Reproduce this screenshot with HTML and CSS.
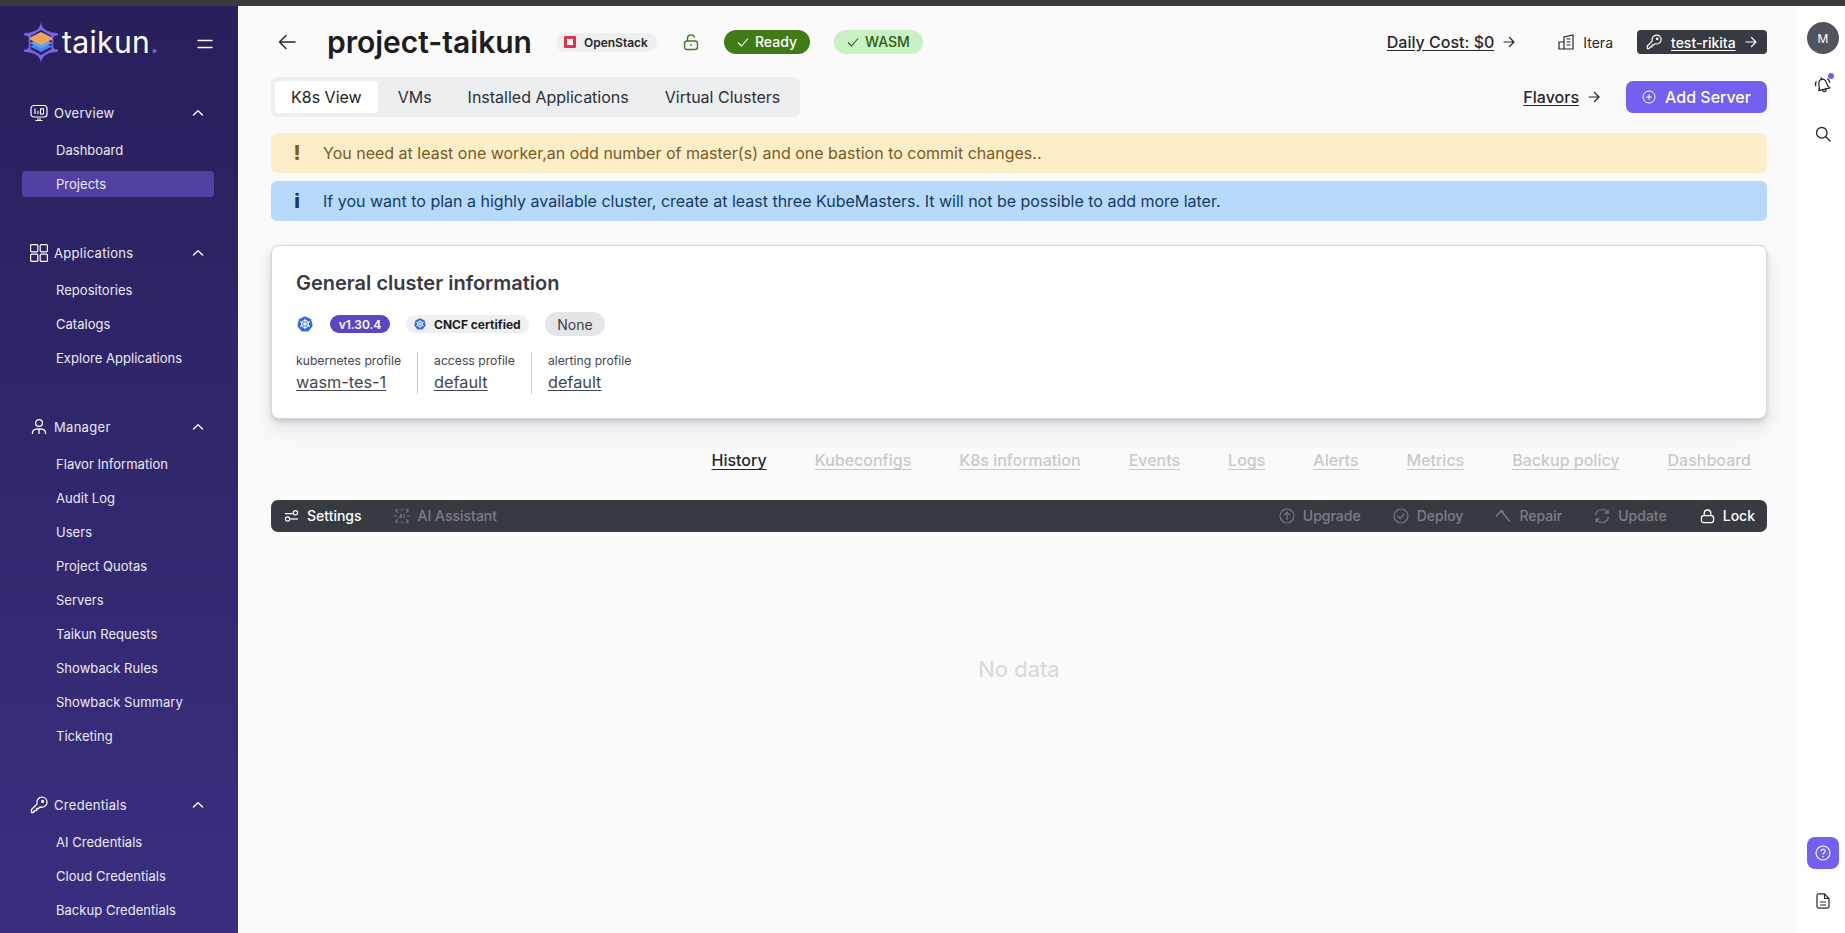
FILE: index.html
```html
<!DOCTYPE html>
<html lang="en">
<head>
<meta charset="utf-8">
<title>project-taikun</title>
<link rel="stylesheet" href="styles.css">
</head>
<body>
<div class="topbar"></div>
<div class="app">
  <aside class="sidebar">
    <div class="brand">
      <svg class="logo" viewBox="0 0 34 41" width="34" height="41">
        <path d="M17 0 C17.6 4 19 6.5 22 8.3 C25 10 29 10.8 33 11 C34.4 11.2 34.4 13.4 33 13.6 C31 13.8 29.6 14.4 29.3 16 L29.3 25 C29.6 26.6 31 27.2 33 27.4 C34.4 27.6 34.4 29.8 33 30 C29 30.2 25 31 22 32.7 C19 34.5 17.6 37 17 41 C16.4 37 15 34.5 12 32.7 C9 31 5 30.2 1 30 C-0.4 29.8 -0.4 27.6 1 27.4 C3 27.2 4.4 26.6 4.7 25 L4.7 16 C4.4 14.4 3 13.8 1 13.6 C-0.4 13.4 -0.4 11.2 1 11 C5 10.8 9 10 12 8.3 C15 6.5 16.4 4 17 0Z" fill="#7a62e4"/>
        <path d="M17 8 L27.4 14 V27 L17 33 L6.6 27 V14Z" fill="#2a205f"/>
        <path d="M17 19 L28 24.5 L17 30 L6 24.5Z" fill="#4f7fee"/>
        <path d="M17 15.5 L28 21 L17 26.5 L6 21Z" fill="#58a6f0"/>
        <path d="M17 10 L28 15.5 V17.5 L17 23 L6 17.5 V15.5Z" fill="#eba653"/>
      </svg>
      <span class="wordmark">taikun<span class="dot">.</span></span>
      <svg class="burger" viewBox="0 0 16 10" width="16" height="10"><path d="M1 1.5H15M1 8.5H15" stroke="#fff" stroke-width="1.4" stroke-linecap="round"/></svg>
    </div>

    <section class="group">
      <div class="group-head">
        <svg class="nav-ico" viewBox="0 0 18 18" width="18" height="18"><rect x="1" y="1.5" width="16" height="11.5" rx="3" fill="none" stroke="#fff" stroke-width="1.2"/><path d="M5 4.5V10M8 7V10M5.5 16.5H12.5M7 15H11" stroke="#fff" stroke-width="1.2" fill="none"/><rect x="10.5" y="4.8" width="3" height="5.2" fill="none" stroke="#fff" stroke-width="1.1"/></svg>
        <span class="group-title">Overview</span>
        <svg class="chev" viewBox="0 0 12 8" width="12" height="8"><path d="M1.5 6L6 1.8L10.5 6" fill="none" stroke="#fff" stroke-width="1.4" stroke-linecap="round" stroke-linejoin="round"/></svg>
      </div>
      <a class="item">Dashboard</a>
      <a class="item active">Projects</a>
    </section>

    <section class="group">
      <div class="group-head">
        <svg class="nav-ico" viewBox="0 0 18 18" width="18" height="18"><g fill="none" stroke="#fff" stroke-width="1.2"><rect x="0.6" y="0.6" width="7.2" height="7.2" rx="1"/><rect x="10.2" y="0.6" width="7.2" height="7.2" rx="1"/><rect x="0.6" y="10.2" width="7.2" height="7.2" rx="1"/><rect x="10.2" y="10.2" width="7.2" height="7.2" rx="1"/></g></svg>
        <span class="group-title">Applications</span>
        <svg class="chev" viewBox="0 0 12 8" width="12" height="8"><path d="M1.5 6L6 1.8L10.5 6" fill="none" stroke="#fff" stroke-width="1.4" stroke-linecap="round" stroke-linejoin="round"/></svg>
      </div>
      <a class="item">Repositories</a>
      <a class="item">Catalogs</a>
      <a class="item">Explore Applications</a>
    </section>

    <section class="group">
      <div class="group-head">
        <svg class="nav-ico" viewBox="0 0 18 18" width="18" height="18"><g fill="none" stroke="#fff" stroke-width="1.3"><circle cx="9" cy="5" r="3.4"/><path d="M2.5 16V14.5C2.5 12 4.5 10.8 9 10.8C13.5 10.8 15.5 12 15.5 14.5V16M9 11V16"/></g></svg>
        <span class="group-title">Manager</span>
        <svg class="chev" viewBox="0 0 12 8" width="12" height="8"><path d="M1.5 6L6 1.8L10.5 6" fill="none" stroke="#fff" stroke-width="1.4" stroke-linecap="round" stroke-linejoin="round"/></svg>
      </div>
      <a class="item">Flavor Information</a>
      <a class="item">Audit Log</a>
      <a class="item">Users</a>
      <a class="item">Project Quotas</a>
      <a class="item">Servers</a>
      <a class="item">Taikun Requests</a>
      <a class="item">Showback Rules</a>
      <a class="item">Showback Summary</a>
      <a class="item">Ticketing</a>
    </section>

    <section class="group">
      <div class="group-head">
        <svg class="nav-ico" viewBox="0 0 18 18" width="18" height="18"><g fill="none" stroke="#fff" stroke-width="1.3" stroke-linejoin="round"><path d="M1.5 13.5L7 8C6 4.5 8.5 1.2 12 1.2C14.8 1.2 17 3.4 17 6.2C17 9.6 13.6 12 10 11L8.5 12.5H6.8V14.5H4.8L3.3 16.5H1.5Z"/><circle cx="12.6" cy="5.4" r="0.9"/></g></svg>
        <span class="group-title">Credentials</span>
        <svg class="chev" viewBox="0 0 12 8" width="12" height="8"><path d="M1.5 6L6 1.8L10.5 6" fill="none" stroke="#fff" stroke-width="1.4" stroke-linecap="round" stroke-linejoin="round"/></svg>
      </div>
      <a class="item">AI Credentials</a>
      <a class="item">Cloud Credentials</a>
      <a class="item">Backup Credentials</a>
    </section>
  </aside>

  <main class="main">
    <header class="head">
      <div class="head-left">
        <svg class="back" viewBox="0 0 18 16" width="18" height="16"><path d="M17 8H1.5M8 1.5L1.5 8L8 14.5" fill="none" stroke="#26272b" stroke-width="1.5" stroke-linecap="round" stroke-linejoin="round"/></svg>
        <h1 class="title">project-taikun</h1>
        <span class="cloud-chip">
          <svg viewBox="0 0 12 12" width="12" height="12"><rect width="12" height="12" rx="1" fill="#e0324b"/><rect x="3" y="3" width="6" height="6" fill="#fff"/></svg>
          OpenStack
        </span>
        <svg class="lock-green" viewBox="0 0 16 18" width="16" height="18"><g fill="none" stroke="#3f7a23" stroke-width="1.4"><rect x="1.5" y="8" width="13" height="8.5" rx="2.5"/><path d="M4.5 8V5C4.5 1.5 10.5 0.5 11.5 4.5"/><path d="M8 11V13"/></g></svg>
        <span class="status ready"><svg viewBox="0 0 12 10" width="12" height="10"><path d="M1 5.5L4.5 9L11 1.5" fill="none" stroke="#fff" stroke-width="1.1"/></svg>Ready</span>
        <span class="status wasm"><svg viewBox="0 0 12 10" width="12" height="10"><path d="M1 5.5L4.5 9L11 1.5" fill="none" stroke="#2d5c1a" stroke-width="1.1"/></svg>WASM</span>
      </div>
      <div class="head-right">
        <a class="cost"><span class="u">Daily Cost: $0</span></a>
        <svg class="arrow" viewBox="0 0 12 12" width="12" height="12"><path d="M1 6H11M6.5 1.5L11 6L6.5 10.5" fill="none" stroke="#26272b" stroke-width="1.2" stroke-linecap="round" stroke-linejoin="round"/></svg>
        <svg class="org-ico" viewBox="0 0 16 16" width="16" height="16"><g fill="none" stroke="#26272b" stroke-width="1.2"><path d="M6 15V3L15 1V15H1V8H6"/><path d="M8.5 5H12.5M8.5 8H12.5M8.5 11H12.5"/></g></svg>
        <span class="org">Itera</span>
        <a class="key-chip">
          <svg viewBox="0 0 18 18" width="16" height="16"><g fill="none" stroke="#fff" stroke-width="1.3" stroke-linejoin="round"><path d="M1.5 13.5L7 8C6 4.5 8.5 1.2 12 1.2C14.8 1.2 17 3.4 17 6.2C17 9.6 13.6 12 10 11L8.5 12.5H6.8V14.5H4.8L3.3 16.5H1.5Z"/><circle cx="12.6" cy="5.4" r="0.9"/></g></svg>
          <span class="u">test-rikita</span>
          <svg viewBox="0 0 12 12" width="12" height="12"><path d="M1 6H11M6.5 1.5L11 6L6.5 10.5" fill="none" stroke="#fff" stroke-width="1.2" stroke-linecap="round" stroke-linejoin="round"/></svg>
        </a>
      </div>
    </header>

    <div class="toolbar">
      <nav class="seg">
        <a class="seg-tab on">K8s View</a>
        <a class="seg-tab">VMs</a>
        <a class="seg-tab">Installed Applications</a>
        <a class="seg-tab">Virtual Clusters</a>
      </nav>
      <div class="toolbar-right">
        <a class="flavors u">Flavors</a>
        <svg class="arrow" viewBox="0 0 12 12" width="12" height="12"><path d="M1 6H11M6.5 1.5L11 6L6.5 10.5" fill="none" stroke="#26272b" stroke-width="1.2" stroke-linecap="round" stroke-linejoin="round"/></svg>
        <button class="add">
          <svg viewBox="0 0 14 14" width="14" height="14"><g fill="none" stroke="#fff" stroke-width="1"><circle cx="7" cy="7" r="6"/><path d="M7 4.2V9.8M4.2 7H9.8"/></g></svg>
          Add Server
        </button>
      </div>
    </div>

    <div class="alert warn"><span class="alert-ico">!</span>You need at least one worker,an odd number of master(s) and one bastion to commit changes..</div>
    <div class="alert info"><span class="alert-ico">i</span>If you want to plan a highly available cluster, create at least three KubeMasters. It will not be possible to add more later.</div>

    <section class="card">
      <h2 class="card-title">General cluster information</h2>
      <div class="badges">
        <svg class="k8s" viewBox="0 0 16 16" width="16" height="16"><path d="M8 0.3L14.2 3.3L15.7 10L11.4 15.4H4.6L0.3 10L1.8 3.3Z" fill="#326ce5"/><g fill="none" stroke="#fff" stroke-width="1"><circle cx="8" cy="8" r="3.6"/><path d="M8 2.8V13.2M3 5.5L13 10.5M13 5.5L3 10.5"/></g></svg>
        <span class="ver">v1.30.4</span>
        <span class="cncf">
          <svg viewBox="0 0 16 16" width="12" height="12"><path d="M8 0.3L14.2 3.3L15.7 10L11.4 15.4H4.6L0.3 10L1.8 3.3Z" fill="#326ce5"/><g fill="none" stroke="#fff" stroke-width="1"><circle cx="8" cy="8" r="3.6"/><path d="M8 2.8V13.2M3 5.5L13 10.5M13 5.5L3 10.5"/></g></svg>
          CNCF certified
        </span>
        <span class="none">None</span>
      </div>
      <div class="profiles">
        <div class="profile"><span class="p-label">kubernetes profile</span><a class="p-value">wasm-tes-1</a></div>
        <div class="profile"><span class="p-label">access profile</span><a class="p-value">default</a></div>
        <div class="profile"><span class="p-label">alerting profile</span><a class="p-value">default</a></div>
      </div>
    </section>

    <nav class="tabs">
      <a class="tab current">History</a>
      <a class="tab">Kubeconfigs</a>
      <a class="tab">K8s information</a>
      <a class="tab">Events</a>
      <a class="tab">Logs</a>
      <a class="tab">Alerts</a>
      <a class="tab">Metrics</a>
      <a class="tab">Backup policy</a>
      <a class="tab">Dashboard</a>
    </nav>

    <div class="actions">
      <div class="act-group left">
        <span class="act on"><svg viewBox="0 0 16 14" width="15" height="14"><g fill="none" stroke="#fff" stroke-width="1.3"><path d="M1 4.5H9.5"/><circle cx="12.2" cy="3.6" r="2.3"/><path d="M15 10.2H6.5"/><circle cx="3.8" cy="10.2" r="2.3"/></g></svg>Settings</span>
        <span class="act"><svg viewBox="0 0 16 16" width="16" height="16"><g fill="none" stroke="#7b7d87" stroke-width="1"><path d="M1 2L4 5M15 2L12 5M1 14L4 11M15 14L12 11M8 0.5V3M8 13V15.5M0.5 8H3M13 8H15.5M3 0.5V3M13 0.5V3M3 13V15.5M13 13V15.5"/><path d="M5.5 10L6.8 6L8 10M6 8.8H7.6M10 6V10" stroke-width="0.9"/></g></svg>AI Assistant</span>
      </div>
      <div class="act-group">
        <span class="act"><svg viewBox="0 0 16 16" width="16" height="16"><g fill="none" stroke="#7b7d87" stroke-width="1.1"><circle cx="8" cy="8" r="7"/><path d="M8 12V4.5M5 7.2L8 4.2L11 7.2"/></g></svg>Upgrade</span>
        <span class="act"><svg viewBox="0 0 16 16" width="16" height="16"><g fill="none" stroke="#7b7d87" stroke-width="1.1"><circle cx="8" cy="8" r="7"/><path d="M4.8 8.2L7.2 10.5L11.4 5.8"/></g></svg>Deploy</span>
        <span class="act"><svg viewBox="0 0 16 16" width="16" height="16"><g fill="none" stroke="#7b7d87" stroke-width="1.3"><path d="M1 8.5L6.5 2.5L8.5 4.5M6 3L15 13.5"/></g></svg>Repair</span>
        <span class="act"><svg viewBox="0 0 16 16" width="16" height="16"><g fill="none" stroke="#7b7d87" stroke-width="1.2"><path d="M1.5 7C2.2 3.8 5 1.5 8 1.5C10.5 1.5 12.5 2.8 13.8 5M14 1.5V5.2H10.5"/><path d="M14.5 9C13.8 12.2 11 14.5 8 14.5C5.5 14.5 3.5 13.2 2.2 11M2 14.5V10.8H5.5"/></g></svg>Update</span>
        <span class="act on"><svg viewBox="0 0 16 16" width="15" height="16"><g fill="none" stroke="#fff" stroke-width="1.4"><rect x="1.5" y="7.5" width="13" height="7.5" rx="2.5"/><path d="M4.5 7.5V5C4.5 0.5 11.5 0.5 11.5 5V7.5"/></g></svg>Lock</span>
      </div>
    </div>

    <p class="empty">No data</p>
  </main>

  <aside class="rail">
    <div class="avatar">M</div>
    <div class="bell">
      <svg class="bell-ico" viewBox="0 0 18 18" width="18" height="18"><g fill="none" stroke="#26272b" stroke-width="1.3" stroke-linejoin="round" stroke-linecap="round"><path d="M3.5 13.5C5 12 5 10 5 8.5C5 5.5 6.8 3 9 3C11.2 3 13 5.5 13 8.5C13 10 13.2 12 15 13.5Z"/><path d="M7.2 13.5C7.2 16.5 10.8 16.5 10.8 13.5M9 3V1.6M1.8 8C1.8 6.5 2.2 5.3 3 4.3M16.2 8C16.2 6.5 15.8 5.3 15 4.3"/></g></svg>
      <span class="ping"></span>
    </div>
    <svg class="search" viewBox="0 0 16 16" width="16" height="16"><g fill="none" stroke="#26272b" stroke-width="1.3" stroke-linecap="round"><circle cx="6.8" cy="6.8" r="5.3"/><path d="M10.8 10.8L15 15"/></g></svg>
    <div class="rail-gap"></div>
    <div class="help"><svg viewBox="0 0 16 16" width="16" height="16"><g fill="none" stroke="#fff" stroke-width="1.1"><circle cx="8" cy="8" r="7"/><path d="M6 6.3C6 3.8 10.2 3.8 10.2 6.2C10.2 7.8 8 7.8 8 9.6"/></g><circle cx="8" cy="11.8" r="0.8" fill="#fff"/></svg></div>
    <svg class="doc" viewBox="0 0 14 16" width="14" height="16"><g fill="none" stroke="#26272b" stroke-width="1.2" stroke-linejoin="round"><path d="M2.5 0.8H8.5L13 5.3V13C13 14.3 12.2 15.2 11 15.2H3C1.8 15.2 1 14.3 1 13V2.5C1 1.5 1.6 0.8 2.5 0.8Z"/><path d="M8.5 0.8V5.3H13M4 9H10M4 12H10"/></g></svg>
  </aside>
</div>
</body>
</html>
```

FILE: styles.css
```css
* { box-sizing: border-box; }
html, body { margin: 0; height: 100%; overflow: hidden; }
body { font-family: "Inter", "Liberation Sans", sans-serif; color: #26272b; background: #fff; }
h1, h2, p { margin: 0; }
svg { flex: none; display: block; }
.u { text-decoration: underline; text-underline-offset: 2px; }

.topbar { height: 6px; background: #3a3a3c; }
.app { display: flex; height: 927px; overflow: hidden; }

/* Sidebar */
.sidebar { width: 238px; flex: none; height: 927px; overflow: hidden; background: linear-gradient(180deg, #281f5b 0%, #3a2f7f 100%); color: #eceaf6; }
.brand { height: 87px; display: flex; align-items: flex-start; padding: 16px 25px 0 24px; position: relative; }
.logo { margin-right: 4px; }
.wordmark { font-size: 30px; font-weight: 400; color: #fff; line-height: 38px; letter-spacing: 0.35px; margin-top: 1px; }
.dot { color: #6b5fd0; }
.burger { margin-left: auto; margin-top: 17px; }
.group { margin-bottom: 32px; }
.group-head { height: 40px; display: flex; align-items: center; padding: 0 34px 0 30px; }
.nav-ico { margin-right: 6px; }
.group-title { font-size: 13px; letter-spacing: 0.3px; flex: 1; }
.item { height: 34px; display: flex; align-items: center; margin: 0 24px 0 22px; padding-left: 34px; font-size: 13px; letter-spacing: 0.03px; position: relative; isolation: isolate; }
.item.active::before { content: ""; position: absolute; z-index: -1; left: 0; right: 0; top: 4px; bottom: 4px; background: #5240a3; border-radius: 4px; }

/* Main */
.main { flex: 1; min-width: 0; background: #fafafb; padding: 24px 30px 0 33px; }
.head { height: 24px; display: flex; align-items: center; justify-content: space-between; margin-bottom: 23px; }
.head-left, .head-right, .toolbar-right { display: flex; align-items: center; }
.back { margin-left: 7px; margin-right: 31px; }
.title { font-size: 30px; font-weight: 600; color: #1c1d21; line-height: 24px; margin-right: 24px; white-space: nowrap; }
.cloud-chip { height: 19px; width: 101px; border-radius: 10px; background: #eeeff1; display: flex; align-items: center; gap: 8px; padding-left: 8px; font-size: 12px; font-weight: 600; white-space: nowrap; }
.lock-green { margin: 0 25px 0 26px; }
.status { height: 24px; padding-bottom: 1px; border-radius: 12px; display: flex; align-items: center; justify-content: center; gap: 6px; font-size: 14px; font-weight: 500; }
.ready { width: 86px; background: #417b16; color: #fff; margin-right: 24px; }
.wasm { width: 89px; background: #c9f1c3; color: #2d5c1a; }
.cost { font-size: 16px; font-weight: 500; margin-right: -1px; }
.arrow { margin-left: 10px; }
.org-ico { margin-left: 43px; }
.org { font-size: 14px; font-weight: 400; margin: 0 24px 0 9px; }
.key-chip { width: 130px; height: 24px; border-radius: 4px; background: #383a42; color: #fff; display: flex; align-items: center; padding-left: 9px; gap: 9px; font-size: 14px; font-weight: 500; }
.toolbar { display: flex; justify-content: space-between; align-items: center; height: 40px; margin-bottom: 16px; }
.seg { display: flex; background: #eceef0; border-radius: 6px; padding: 4px 2px 4px 4px; height: 40px; }
.seg-tab { height: 32px; display: flex; align-items: center; padding: 0 18px; font-size: 16px; color: #2e2f35; white-space: nowrap; }
.seg-tab.on { background: #fff; border-radius: 4px; color: #1c1d21; padding: 0 16px; margin-right: 2px; }
.flavors { font-size: 16px; font-weight: 500; }
.toolbar-right .arrow { margin-left: 9px; }
.add { width: 141px; height: 32px; margin-left: 26px; border: 0; border-radius: 7px; background: #7260f1; color: #fff; font: 500 16px "Inter", sans-serif; display: flex; align-items: center; justify-content: center; gap: 9px; }
.alert { height: 40px; border-radius: 6px; display: flex; align-items: center; font-size: 16px; padding-left: 18px; margin-bottom: 8px; }
.alert-ico { width: 16px; margin-right: 18px; text-align: center; font-size: 20px; font-weight: 800; line-height: 1; }
.warn { background: #fbeec9; color: #7d5a1f; }
.info { background: #b6d9fc; color: #143b63; margin-bottom: 24px; }
.card { height: 174px; background: #fff; border: 1px solid #d6d7da; border-radius: 8px; box-shadow: 0 3px 5px rgba(30, 30, 50, 0.16), 0 10px 22px rgba(30, 30, 50, 0.1); padding: 25px 24px 0; }
.card-title { font-size: 20px; font-weight: 600; line-height: 24px; color: #383a42; }
.badges { display: flex; align-items: center; height: 24px; margin-top: 17px; }
.k8s { margin-left: 1px; margin-right: 17px; }
.ver { width: 60px; height: 18px; border-radius: 9px; background: #5a46c4; color: #fff; font-size: 12px; font-weight: 600; display: flex; align-items: center; justify-content: center; margin-right: 16px; }
.cncf { width: 123px; height: 18px; border-radius: 9px; background: #eeeff1; color: #1c1d21; font-size: 12px; font-weight: 700; display: flex; align-items: center; gap: 8px; padding-left: 8px; margin-right: 16px; white-space: nowrap; }
.none { width: 60px; height: 24px; border-radius: 12px; background: #e4e5e8; color: #3c3e46; font-size: 14px; display: flex; align-items: center; justify-content: center; }
.profiles { display: flex; margin-top: 16px; }
.profile { display: flex; flex-direction: column; height: 42px; padding: 0 16px; border-left: 1px solid #c9cacd; }
.profile:first-child { padding-left: 0; border-left: 0; padding-right: 16px; }
.p-label { font-size: 12.2px; line-height: 18px; color: #44464e; white-space: nowrap; }
.p-value { font-size: 16.3px; line-height: 24px; color: #44464e; text-decoration: underline; text-underline-offset: 2px; }
.tabs { display: flex; justify-content: flex-end; gap: 48px; height: 24px; margin: 29px 0 28px; padding-right: 16px; }
.tab { font-size: 16px; line-height: 24px; font-weight: 500; color: #c8c9ce; text-decoration: underline; text-underline-offset: 3px; white-space: nowrap; }
.tab.current { color: #26272b; }
.actions { height: 32px; background: #383a42; border-radius: 7px; display: flex; align-items: center; justify-content: space-between; padding: 0 12px 1px; }
.act-group { display: flex; align-items: center; gap: 32px; }
.act { display: flex; align-items: center; gap: 8px; font-size: 14px; font-weight: 500; color: #7b7d87; white-space: nowrap; }
.act.on { color: #fff; }
.act:last-child { margin-left: 1px; }
.left { margin-left: 1px; }
.left .act:last-child { margin-left: 0; }
.empty { margin-top: 122px; text-align: center; font-size: 22px; line-height: 30px; color: #d6d7db; }

/* Right rail */
.rail { width: 48px; flex: none; background: #fff; display: flex; flex-direction: column; align-items: center; padding: 16px 0 24px; }
.avatar { width: 32px; height: 32px; border-radius: 50%; background: #52535e; color: #fff; font-size: 12px; display: flex; align-items: center; justify-content: center; margin-left: 4px; }
.bell { position: relative; margin: 22px 0 0 4px; }
.bell-ico { transform: rotate(-14deg); }
.ping { position: absolute; top: -3px; right: -2px; width: 6px; height: 6px; border-radius: 50%; background: #7260f1; }
.search { margin: 32px 0 0 4px; }
.rail-gap { flex: 1; }
.help { width: 32px; height: 32px; border-radius: 8px; background: #7260f1; display: flex; align-items: center; justify-content: center; margin-left: 4px; }
.doc { margin: 24px 0 0 4px; }
```
